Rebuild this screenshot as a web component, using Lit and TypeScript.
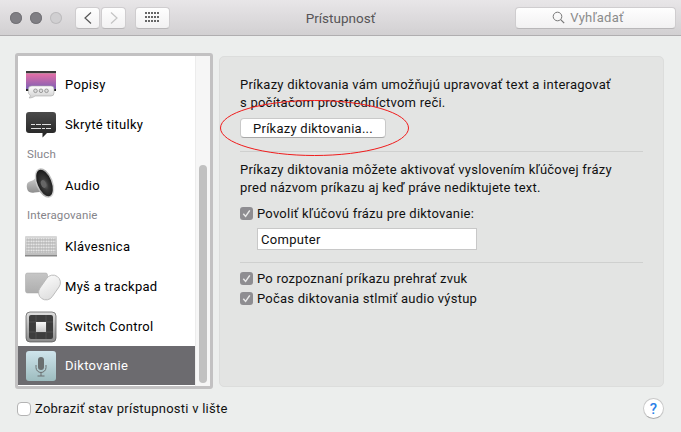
import { LitElement, html, css, svg } from "lit";
import { customElement } from "lit/decorators.js";

const popisy = svg`<svg class="ic" viewBox="0 0 30 30" width="30" height="30">
<defs><linearGradient id="pg" x1="0" y1="0" x2="0" y2="1"><stop offset="0" stop-color="#e56fa6"/><stop offset="1" stop-color="#7d5fb5"/></linearGradient>
<linearGradient id="bb" x1="0" y1="0" x2="0" y2="1"><stop offset="0" stop-color="#fff"/><stop offset="1" stop-color="#cfcfcf"/></linearGradient></defs>
<rect x="0" y="2" width="30" height="2.500" fill="#3a3a3a"/><rect x="0" y="4.500" width="30" height="15.500" fill="url(#pg)"/><rect x="0" y="20" width="30" height="2" fill="#222"/>
<path d="M6 17h19a3 3 0 0 1 3 3v4a3 3 0 0 1-3 3H9c-1.500 1.300-3 1.800-6 2 1-1 1.500-2 1.200-3C2.800 25.400 2.400 24.500 2.400 23v-3A3.500 3 0 0 1 6 17z" fill="url(#bb)" stroke="#aaa" stroke-width=".6"/>
<g fill="#ddd" stroke="#888" stroke-width=".8"><circle cx="9.500" cy="21.800" r="1.800"/><circle cx="15" cy="21.800" r="1.800"/><circle cx="20.500" cy="21.800" r="1.800"/></g></svg>`;
const cc = svg`<svg class="ic" viewBox="0 0 30 30" width="30" height="30">
<defs><linearGradient id="cg" x1="0" y1="0" x2="0" y2="1"><stop offset="0" stop-color="#4a4a4a"/><stop offset="1" stop-color="#232323"/></linearGradient></defs>
<path d="M3 3h24a3 3 0 0 1 3 3v15a3 3 0 0 1-3 3h-6l-4.500 4.500V24H3a3 3 0 0 1-3-3V6a3 3 0 0 1 3-3z" fill="url(#cg)"/>
<path d="M5 15.500h4M10 15.500h5M16 15.500h9M5 19.500h10M16 19.500h3M20 19.500h5" stroke="#ddd" stroke-width="1"/></svg>`;
const audio = svg`<svg class="ic" viewBox="0 2 30 32" width="30" height="32">
<defs><linearGradient id="sg" x1="0" y1="0" x2="0" y2="1"><stop offset="0" stop-color="#d8d8d8"/><stop offset="1" stop-color="#8c8c8c"/></linearGradient>
<linearGradient id="sr" x1="0" y1="0" x2="1" y2="1"><stop offset="0" stop-color="#e8e8e8"/><stop offset=".5" stop-color="#a8a8a8"/><stop offset="1" stop-color="#f0f0f0"/></linearGradient>
<radialGradient id="sc" cx=".5" cy=".55" r=".6"><stop offset="0" stop-color="#6e6e6e"/><stop offset=".35" stop-color="#3a3a3a"/><stop offset="1" stop-color="#141414"/></radialGradient></defs>
<path d="M1.500 16c1.500-1.500 4-2 6-3l5-5 6 18-5-1-5 .5c-3 .5-6 0-7-2.500s-1-5.500 0-7z" fill="url(#sg)"/>
<ellipse cx="18.500" cy="16" rx="8.500" ry="15.500" transform="rotate(-22 18.500 16)" fill="url(#sr)"/>
<ellipse cx="18.500" cy="16" rx="7" ry="14" transform="rotate(-22 18.500 16)" fill="url(#sc)"/>
<ellipse cx="17.500" cy="17" rx="2.500" ry="4" transform="rotate(-22 17.500 17)" fill="#666"/></svg>`;
const kbd = svg`<svg class="ic" viewBox="1 0 32 24" width="32" height="24">
<defs><linearGradient id="kg" x1="0" y1="0" x2="0" y2="1"><stop offset="0" stop-color="#d8d8d8"/><stop offset="1" stop-color="#bcbcbc"/></linearGradient>
<pattern id="kp" width="2.500" height="3" patternUnits="userSpaceOnUse"><rect width="2.500" height="3" fill="#a9a9a9"/><rect x=".4" y=".4" width="1.800" height="2.100" fill="#ececec"/></pattern></defs>
<rect x="0" y="2" width="32" height="20" rx="1" fill="url(#kg)"/><rect x="1.500" y="4" width="29" height="15" fill="url(#kp)"/><rect x="0" y="21" width="32" height="1.500" fill="#888"/></svg>`;
const mouse = svg`<svg class="ic" viewBox="0 0 32 30" width="32" height="30">
<defs><linearGradient id="tg" x1="0" y1="0" x2="0" y2="1"><stop offset="0" stop-color="#c6c6c6"/><stop offset="1" stop-color="#aeaeae"/></linearGradient>
<linearGradient id="mg" x1="0" y1="0" x2="1" y2="1"><stop offset="0" stop-color="#fbfbfb"/><stop offset="1" stop-color="#dcdcdc"/></linearGradient></defs>
<rect x="-.5" y="2" width="22" height="20" rx="2" fill="url(#tg)" stroke="#a4a4a4" stroke-width=".5"/>
<rect x="16" y="3" width="15" height="27" rx="7.500" transform="rotate(35 23.500 16.500)" fill="url(#mg)" stroke="#b4b4b4" stroke-width=".8"/></svg>`;
const sw = svg`<svg class="ic" viewBox="0 -1 30 30" width="30" height="30">
<defs><linearGradient id="swb" x1="0" y1="0" x2="0" y2="1"><stop offset="0" stop-color="#e0e0e0"/><stop offset="1" stop-color="#8a8a8a"/></linearGradient>
<linearGradient id="swk" x1="0" y1="0" x2="0" y2="1"><stop offset="0" stop-color="#fafafa"/><stop offset="1" stop-color="#c8c8c8"/></linearGradient></defs>
<rect x="0" y="0" width="30" height="30" rx="4" fill="url(#swb)" stroke="#555" stroke-width=".7"/><rect x="3" y="3" width="24" height="24" rx="2" fill="#3d3d3d"/>
<path d="M10 3v24M20 3v24M3 10h24M3 20h24" stroke="#555" stroke-width=".8"/><rect x="10" y="10" width="10" height="10" fill="url(#swk)"/></svg>`;
const mic = svg`<svg class="ic" viewBox="0 0 30 30" width="30" height="30">
<defs><linearGradient id="mb" x1="0" y1="0" x2="0" y2="1"><stop offset="0" stop-color="#cfe4ec"/><stop offset="1" stop-color="#9dbcbf"/></linearGradient></defs>
<rect x="0" y="0" width="30" height="30" rx="3" fill="url(#mb)"/>
<rect x="12" y="6" width="6" height="13" rx="3" fill="#6a6f70"/><path d="M10 14v2.500a5 5 0 0 0 10 0V14M15 21.500V25" fill="none" stroke="#6a6f70" stroke-width="1"/><path d="M11.500 25h7" stroke="#6a6f70" stroke-width="1"/></svg>`;

@customElement("app-root")
export class AppRoot extends LitElement {
  static styles = css`
    :host { display: block; width: 681px; height: 432px; overflow: hidden; background: #eceeed;
      font-family: Roboto, "Noto Sans", sans-serif; font-size: 13px; letter-spacing: .24px; color: #111; }
    .bar { height: 35px; box-sizing: content-box; border-bottom: 1px solid #b0aeb0; background: linear-gradient(#e8e6e8, #d2d0d2);
      display: flex; align-items: center; padding: 0 5px 0 10px; }
    .dot { width: 12px; height: 12px; border-radius: 50%; background: #807f84; margin-right: 8px; box-shadow: inset 0 0 0 1px #747378; }
    .dot.off { background: #d0cfd1; box-shadow: inset 0 0 0 1px #bdbcbe; }
    .tb { height: 22px; box-sizing: border-box; background: linear-gradient(#fefefe, #f2f1f2); border: 1px solid #cfcdcf; border-bottom-color: #b9b7b9;
      border-radius: 4px; display: flex; align-items: center; justify-content: center; }
    .nav { display: flex; margin-left: 5px; gap: 1px; }
    .nav .tb { width: 25px; }
    .grid { width: 35px; margin-left: 9px; }
    .title { flex: 1; text-align: center; color: #575557; font-size: 13.500px; letter-spacing: 0; padding-right: 4px; }
    .search { width: 161px; color: #8b8b8b; gap: 5px; padding-right: 15px; }
    .main { display: flex; padding: 17px 0 0 15px; gap: 6px; align-items: flex-start; }
    .side { width: 198px; height: 336px; box-sizing: border-box; border: 3px solid #c2c1c2; border-radius: 3px; background: #fff; display: flex; }
    .list { width: 177px; padding-top: 8px; }
    .track { width: 15px; background: #f6f6f6; border-left: 1px solid #ececec; box-sizing: border-box; padding: 109px 0 0 3px; }
    .thumb { width: 8px; height: 218px; border-radius: 4px; background: #c1c1c1; }
    .row { height: 40px; display: flex; align-items: center; color: #000; letter-spacing: .3px; }
    .ico { width: 47px; padding-left: 8px; box-sizing: border-box; display: flex; align-items: center; }
    .ic { display: block; overflow: visible; }
    .row.sel { background: #6c6b6f; color: #fff; height: 39px; }
    .head { height: 21px; line-height: 21px; padding-left: 9px; font-size: 11.500px; letter-spacing: .1px; color: #85848a; }
    .panel { width: 445px; height: 331px; margin-top: 3px; box-sizing: border-box; position: relative; background: #e3e4e3; border: 1px solid #dcdddc; border-radius: 5px; padding: 19px 20px 0 20px; }
    p { margin: 0; line-height: 18px; }
    .btn { width: 146px; height: 20px; box-sizing: border-box; margin-top: 6px; background: #fff; border: 1px solid #c9c9c9; border-bottom-color: #a8a8a8; border-radius: 4px;
      display: flex; align-items: center; justify-content: center; color: #111; }
    hr { border: 0; height: 1px; background: #cfd0cf; margin: 0; }
    .h1 { margin-top: 13px; }
    .p2 { margin-top: 9px; }
    .ck { display: flex; align-items: center; gap: 4px; height: 20px; }
    .box { width: 13px; height: 13px; box-sizing: border-box; border-radius: 3px; background: #8e8d91; display: flex; align-items: center; justify-content: center; flex: none; }
    .box.empty { background: #fff; border: 1px solid #b4b4b4; width: 14px; height: 14px; border-radius: 4px; }
    .c1 { margin-top: 6px; }
    .input { margin: 5px 0 0 17px; width: 220px; height: 22px; box-sizing: border-box; background: #fff; border: 1px solid #c8c8c8; padding: 1px 0 0 3px; line-height: 20px; color: #111; letter-spacing: .3px; }
    .h2 { margin-top: 12px; }
    .c2 { margin-top: 5px; }
    .ring { position: absolute; left: 0; top: 43px; pointer-events: none; }
    .foot { display: flex; align-items: center; justify-content: space-between; padding: 9px 17px 0 17px; }
    .help { width: 21px; height: 21px; box-sizing: border-box; border-radius: 50%; background: #fff; border: 1px solid #c8c8c8; border-bottom-color: #aaa; color: #2a7fe8; font-size: 15px; font-weight: 500;
      display: flex; align-items: center; justify-content: center; }
  `;

  private row(icon: unknown, label: string, sel = false) {
    return html`<div class="row ${sel ? "sel" : ""}"><span class="ico">${icon}</span><span>${label}</span></div>`;
  }
  private check() {
    return html`<span class="box"><svg width="11" height="11" viewBox="0 0 11 11"><path d="M2.300 5.800l2.300 2.600 4.200-6" fill="none" stroke="#e9e9e9" stroke-width="1.500"/></svg></span>`;
  }

  render() {
    return html`
      <div class="bar">
        <span class="dot"></span><span class="dot"></span><span class="dot off"></span>
        <div class="nav">
          <div class="tb"><svg width="10" height="14" viewBox="0 0 10 14"><path d="M8 1.500L2 7l6 5.500" fill="none" stroke="#555" stroke-width="1.200"/></svg></div>
          <div class="tb"><svg width="10" height="14" viewBox="0 0 10 14"><path d="M2 1.500L8 7l-6 5.500" fill="none" stroke="#c4c4c4" stroke-width="1.200"/></svg></div>
        </div>
        <div class="tb grid"><svg width="15" height="11" viewBox="0 0 15 11" fill="#666">
          ${[0, 4, 8].map((y) => [0, 3, 6, 9, 12].map((x) => svg`<rect x="${x}" y="${y}" width="2" height="2"/>`))}</svg></div>
        <div class="title">Prístupnosť</div>
        <div class="tb search"><svg width="13" height="13" viewBox="0 0 13 13"><circle cx="5.500" cy="5.500" r="4.300" fill="none" stroke="#777" stroke-width="1"/><path d="M8.700 8.700l3.500 3.500" stroke="#777" stroke-width="1.200"/></svg><span>Vyhľadať</span></div>
      </div>
      <div class="main">
        <div class="side">
          <div class="list">
            ${this.row(popisy, "Popisy")}
            ${this.row(cc, "Skryté titulky")}
            <div class="head">Sluch</div>
            ${this.row(audio, "Audio")}
            <div class="head">Interagovanie</div>
            ${this.row(kbd, "Klávesnica")}
            ${this.row(mouse, "Myš a trackpad")}
            ${this.row(sw, "Switch Control")}
            ${this.row(mic, "Diktovanie", true)}
          </div>
          <div class="track"><div class="thumb"></div></div>
        </div>
        <div class="panel">
          <p>Príkazy diktovania vám umožňujú upravovať text a interagovať<br />s počítačom prostredníctvom reči.</p>
          <div class="btn">Príkazy diktovania...</div>
          <hr class="h1" />
          <p class="p2">Príkazy diktovania môžete aktivovať vyslovením kľúčovej frázy<br />pred názvom príkazu aj keď práve nediktujete text.</p>
          <div class="ck c1">${this.check()}<span>Povoliť kľúčovú frázu pre diktovanie:</span></div>
          <div class="input">Computer</div>
          <hr class="h2" />
          <div class="ck c2">${this.check()}<span>Po rozpoznaní príkazu prehrať zvuk</span></div>
          <div class="ck">${this.check()}<span>Počas diktovania stlmiť audio výstup</span></div>
          <svg class="ring" width="192" height="60" viewBox="0 0 192 60"><ellipse cx="94.500" cy="28" rx="94" ry="27.500" fill="none" stroke="#f01c1c" stroke-width="1"/></svg>
        </div>
      </div>
      <div class="foot">
        <div class="ck"><span class="box empty"></span><span>Zobraziť stav prístupnosti v lište</span></div>
        <div class="help">?</div>
      </div>
    `;
  }
}
